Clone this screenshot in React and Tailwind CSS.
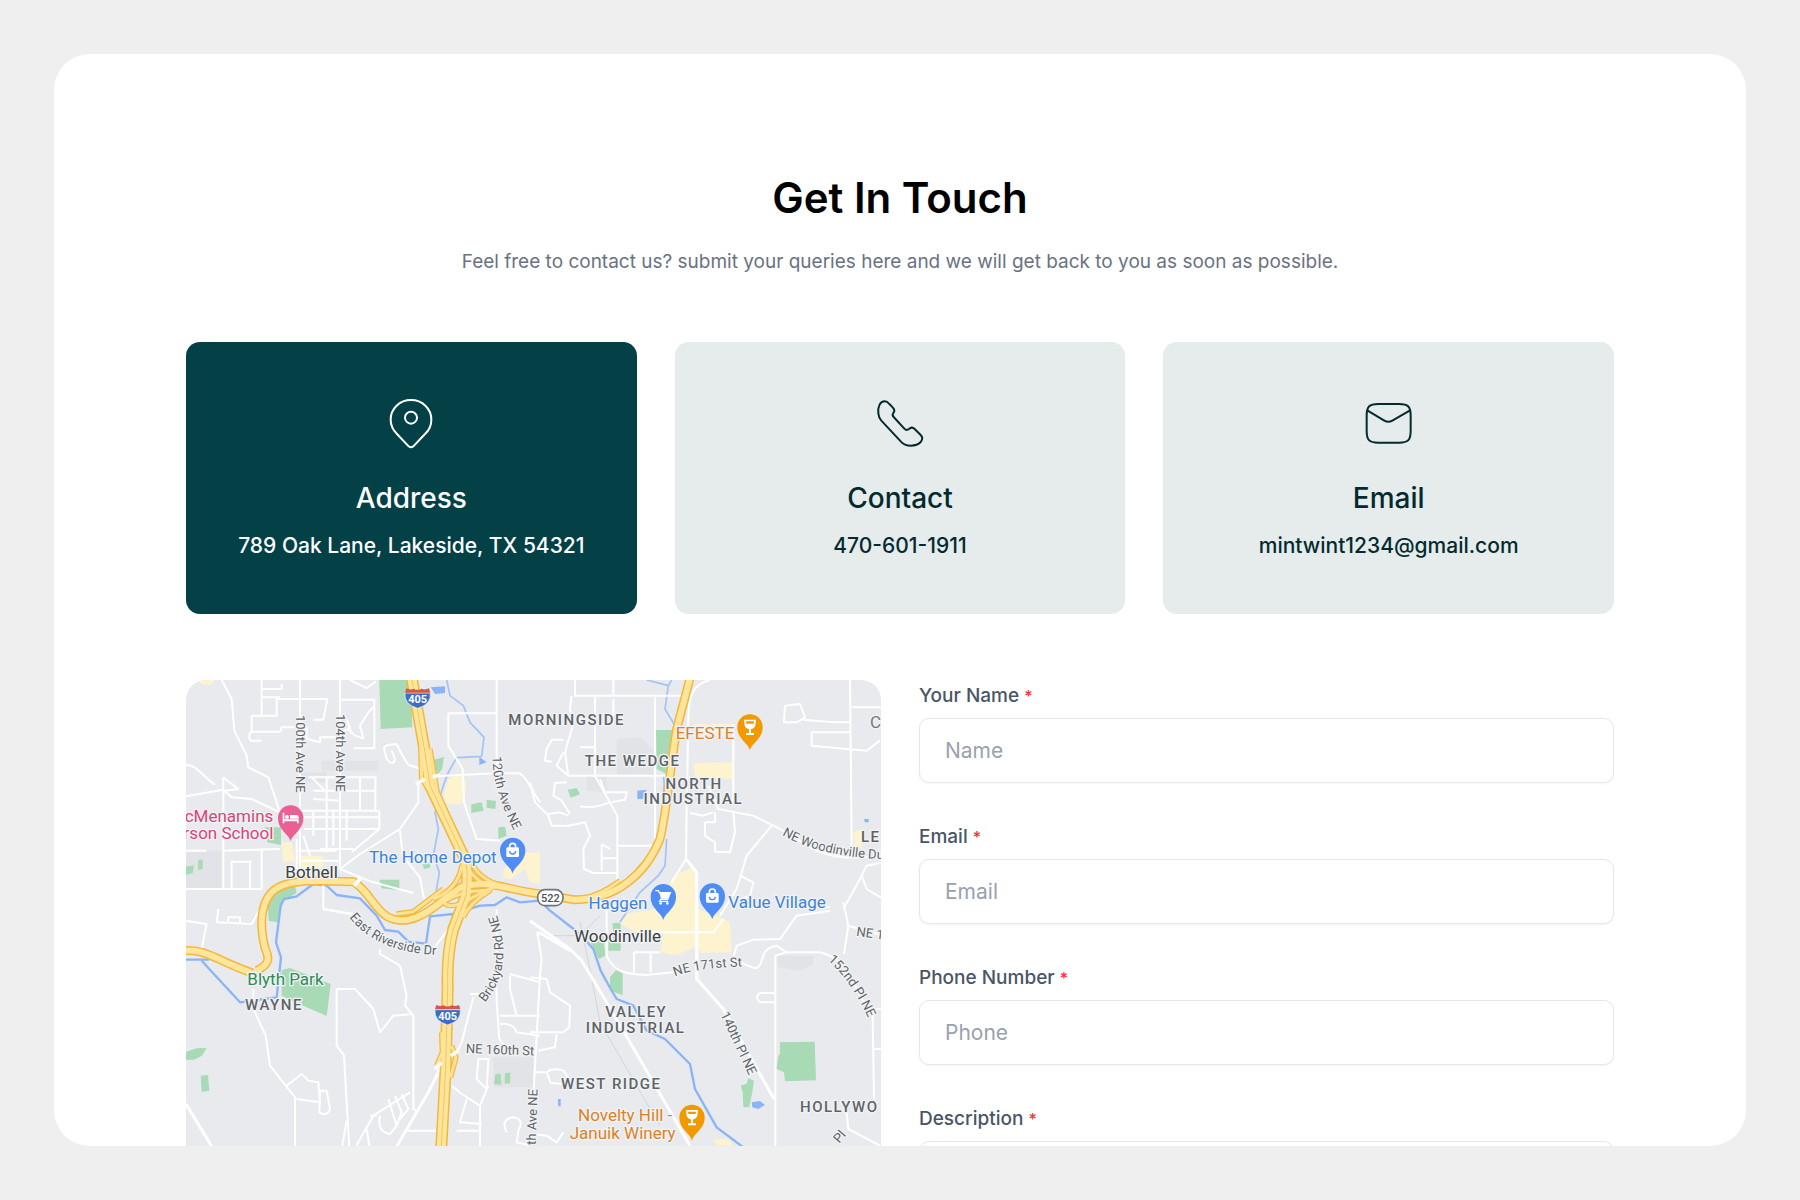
const cards = [
  { title: "Address", text: "789 Oak Lane, Lakeside, TX 54321", icon: PinIcon, active: true },
  { title: "Contact", text: "470-601-1911", icon: PhoneIcon },
  { title: "Email", text: "mintwint1234@gmail.com", icon: MailIcon },
];

const fields = [
  { id: "name", label: "Your Name", placeholder: "Name", type: "text" },
  { id: "email", label: "Email", placeholder: "Email", type: "email" },
  { id: "phone", label: "Phone Number", placeholder: "Phone", type: "tel" },
];

const iconProps = {
  className: "size-14",
  fill: "none",
  stroke: "currentColor",
  strokeWidth: 6,
  strokeLinecap: "round",
  strokeLinejoin: "round",
  "aria-hidden": true,
};

function PinIcon() {
  return (
    <svg viewBox="40 48 168 168" {...iconProps}>
      <path d="M124 60C90 60 63 86 63 119C63 140 72 152 82 162L117 199Q124 205 131 199L166 162C177 152 185 140 185 119C185 86 158 60 124 60Z" />
      <circle cx="124" cy="113" r="18" />
    </svg>
  );
}

function PhoneIcon() {
  return (
    <svg viewBox="36 48 168 168" {...iconProps}>
      <path d="M55 100C53 80 60 64 74 64C81 64 84 67 88 72L98 82C104 88 105 93 100 99C97 103 97 107 101 111L133 146C138 151 143 150 147 147C152 142 159 142 164 147L182 165C189 172 187 180 182 186C174 195 164 197 152 197C140 197 132 194 125 187L64 122C58 116 56 108 55 100Z" />
    </svg>
  );
}

function MailIcon() {
  return (
    <svg viewBox="34 48 168 168" {...iconProps}>
      <path d="M86 72H148C176 72 183 80 183 108V152C183 180 176 188 148 188H86C58 188 51 180 51 152V108C51 80 58 72 86 72Z" />
      <path d="M54 92L104 122Q116 129 128 122L180 92" />
    </svg>
  );
}

const greens = [
  "M598 33H692L697 175L602 180Z",
  "M762 272L792 264L786 300L772 318Z",
  "M874 406L905 400L911 425L874 432Z",
  "M920 392L948 396L946 420L920 416Z",
  "M955 475L975 473L980 500L955 510Z",
  "M255 475H303V528L262 520Z",
  "M18 592L42 590L38 612L18 618Z",
  "M55 572H68V600L54 602Z",
  "M598 632H658V664L605 658Z",
  "M728 585L750 582L750 596L732 600Z",
  "M262 690L290 668L345 650L350 672L310 695L292 760L266 755Z",
  "M305 903L330 897L452 945L440 1041L370 1010L305 980Z",
  "M18 1148L50 1138L80 1137L66 1160L42 1172L18 1172Z",
  "M62 1220L84 1218L88 1265L65 1269Z",
  "M946 1216L962 1214L964 1247L942 1246Z",
  "M975 1212L991 1211L990 1243L974 1244Z",
  "M1428 183H1482L1470 320L1430 300Z",
  "M1163 362L1190 357L1200 376L1172 386Z",
  "M1232 822L1270 800L1276 860L1256 870Z",
  "M1298 762H1322V845H1285V815H1300Z",
  "M1290 925L1308 903L1328 912V978L1290 965Z",
  "M1800 1120L1904 1118L1908 1234L1815 1237L1812 1210L1790 1200L1795 1160L1800 1155Z",
  "M1682 1250L1700 1244L1705 1228L1722 1235L1718 1262L1708 1314L1690 1315L1688 1270Z",
];

const yellows = [
  "M805 330Q830 315 850 325L860 345L848 400Q825 415 795 400Q790 380 798 350Z",
  "M305 520H335L345 575L310 580Z",
  "M355 560H430V590L360 620Z",
  "M970 600L1030 550H1080V645L1050 640L1035 600L990 632L970 625Z",
  "M1540 283L1660 280V330L1545 325Z",
  "M1545 165H1660V200H1545Z",
  "M1540 595L1550 650V720L1600 735L1650 760L1655 850L1560 852L1555 830L1490 858L1440 850L1450 790H1370L1320 765L1335 735L1430 720L1480 620Z",
  "M60 33L105 33L90 48L62 45Z",
  "M2020 490L2045 480V540L2025 535Z",
  "M1600 1412L1640 1408L1660 1428H1610Z",
];

const grays = [
  "M425 275H595V305H425Z",
  "M940 1165H1060V1255H940Z",
  "M1310 210L1380 205L1420 240V320L1310 315Z",
  "M1790 860H1900V885L1860 905L1795 895Z",
  "M18 545H125V660H18Z",
  "M1220 320H1280V370L1220 365Z",
  "M360 310H440V340H360Z",
];

const localRoads = [
  "M125 33L155 90L163 185L200 260L205 295L265 325L300 430",
  "M360 33V600M480 33V600M245 33V145M245 60H305V45M245 85H300",
  "M215 140H290V90H442L430 152H400M290 90V140M215 140V186",
  "M245 215H212Q203 205 212 188H300L305 175H380V210L420 220V205H470",
  "M510 33L560 57L588 37M480 92H583V238H520M480 190L505 180L525 200L550 208L540 170L565 130L580 115M500 150L515 195",
  "M612 240Q612 225 650 226L668 260L685 288L725 300M612 240L620 270Q640 295 645 270L635 245",
  "M18 288C50 285 75 330 105 347M130 325V400M130 325L175 360L135 365M18 382L130 362L155 385L215 390L300 430",
  "M360 425H598M372 480H595M372 445H595M385 325H590M400 365H590M400 390L480 395M395 325L440 370M440 325V550M540 325V425M586 325V425M598 425V480L515 550M400 425V500M460 425V530M500 425V515M420 540H520M350 545H470M360 575H480M350 510V600M370 500L390 560",
  "M130 400V660M18 660H245M155 660V578H215M210 578V660M245 545V660M130 545L300 540M130 500L225 510M18 545H80",
  "M715 335V400L660 480L540 555L480 600L580 640L700 672M660 485L668 560L720 625L732 690",
  "M950 33V315M805 133H950M805 133V230L848 300L852 400L890 510L960 515M765 322L950 313H1020C1045 330 1055 365 1080 400",
  "M430 640V720L520 735",
  "M1185 33V80H1505M1300 33V80M1175 80L1170 115L1178 170L1155 250L1165 320M1245 80V320L1312 440V660M1165 320H1460M1300 90V140M1425 85V530H1312",
  "M1100 240L1115 212H1150M1100 240L1095 275L1115 278M1150 250L1130 290L1165 320M1200 235H1245M1050 340L1065 400L1105 440L1115 470L1165 470L1215 460L1230 500L1210 540L1212 600L1240 612H1312",
  "M1160 340L1125 342L1120 380L1145 395L1170 435M1105 435L1140 430L1165 440M1200 412Q1240 420 1290 400M1260 330L1275 370H1340L1335 392L1295 400M1265 525V605M1265 525L1290 540M1265 568H1310",
  "M1590 33C1540 45 1525 80 1525 150L1520 430L1518 570L1475 640M1518 570L1550 610V720",
  "M1585 350L1615 420L1720 440L1800 480L1900 540C1980 580 2060 560 2110 565",
  "M1775 470L1700 560L1670 660L1620 740M2010 33L2015 530M2015 115H2110M1815 110L1860 105L1875 145L1850 160H1812ZM1870 152L1960 160H2010M1895 190H2010M1895 190V230L2060 245L2100 215",
  "M1575 460L1605 460V430M1575 460V500L1605 520V548L1650 550L1665 490L1660 430M1530 432L1570 440L1600 430M1660 165V400M1680 620L1720 640L1710 680L1660 700",
  "M2110 580L2060 590L2045 620L2060 660L2110 690M2045 620L1990 720M1860 710L1950 715",
  "M220 960V1020L257 1100L270 1190L345 1285V1440M320 1250L365 1215L385 1235L415 1240L420 1300L350 1290M420 1265H440L450 1320Q440 1345 418 1330Z",
  "M470 960H525L580 1020L600 1090L640 1040L700 1035M470 960V1130L492 1160L508 1440M600 840V855L660 890L680 980L675 1010L700 1040V1320L715 1330",
  "M430 720L510 735M820 760L760 840M880 985L845 1120L825 1160M870 975H920M895 1170H925L920 1260L890 1230Z",
  "M950 720V1000L958 1110L980 1140M990 920V960L1010 1040M960 1040H1080M960 1065Q1000 1060 1010 1090L1080 1100M990 915L1080 940",
  "M815 1250L845 1275L900 1310V1440M860 1290L840 1360L905 1365M830 1385H900M925 1250L900 1310M980 1390Q960 1350 1000 1345Q1035 1350 1015 1385L1010 1420L1050 1430",
  "M530 1428L580 1340L690 1270M570 1340L590 1340M600 1340Q590 1390 630 1395L650 1370L625 1290M645 1280L665 1330L650 1370M665 1275L685 1320L660 1350M680 1385H785M560 1380L570 1440M500 1355L485 1440",
  "M115 720L110 760L215 765L240 720M145 765V745H180V765M18 755L80 765L65 840",
  "M1077 800L1072 790L1085 870L1080 920L1060 1280M1050 925L1100 930L1110 970L1170 1010L1168 1075L1150 1090H1050M1130 1095L1125 1135L1075 1145",
  "M1060 1210H1095M1175 1240L1150 1205Q1120 1195 1100 1210L1112 1242L1150 1245M1050 1395L1100 1400L1130 1420L1150 1390",
  "M1280 720V860C1300 910 1340 915 1400 918L1480 910M1362 850V910M1412 850V910M1362 850H1440M1412 790H1600L1630 750",
  "M1680 880L1725 898C1760 890 1730 840 1790 830L1820 850H1920C1990 865 2010 920 2040 980L2078 1040L2082 1290M2080 1140H2110M2070 1020H2110",
  "M1552 700V930L1630 1020L1782 1290M1990 700L2005 770L1992 855M2005 770L2110 800M1660 865L1670 830L1720 812L1800 810L1850 740L1950 725",
  "M1786 860V1440M1786 860L1820 850M1786 972H1740Q1722 985 1740 1000H1786M2000 1330L2005 1380L2100 1430",
];

const arterials = [
  "M1050 755L1170 840L1205 875L1280 1000L1350 1120L1530 1430",
  "M1518 570L1550 610V930L1630 1020L1782 1290",
  "M18 1305L100 1440",
  "M785 1190L745 1270L640 1450",
  "M1077 790L1170 845",
];

const streams = [
  "M800 33L810 80L850 110L870 160L912 205L905 262L830 266L805 310L790 350L765 430L775 480L760 560L778 610L765 690",
  "M1400 33L1465 50L1455 120L1485 170M1475 33L1465 50M1450 320Q1455 350 1450 370",
  "M1460 510L1455 590L1435 620L1380 670L1320 760",
];

const rivers = [
  "M18 872H88M65 875L180 1000L290 985L303 865L288 820L302 710L312 690L350 682L400 645L440 650L470 678L540 688L590 740L615 783L655 788L685 818L738 824L750 742L820 735L900 710L945 708L980 685L1020 700L1080 695L1110 725L1200 795L1240 840L1262 905L1292 960L1310 990L1360 1010L1400 1085L1455 1110L1530 1185L1545 1260L1610 1375L1690 1435",
];

const interstate = [
  "M694 20L735 250L750 350L850 560Q868 600 858 680L820 780Q800 850 803 960L797 1200L775 1593",
];

const highways = [
  "M18 845C80 840 120 880 218 912M230 905C275 885 265 860 256 840C240 780 238 710 275 670C300 645 340 637 400 635L520 638C565 665 580 715 620 742C680 775 740 735 800 685L850 650",
  "M860 650C930 635 960 655 1050 670L1180 692C1310 695 1400 610 1440 510C1460 430 1470 300 1490 180L1532 20",
];

const ramps = [
  "M722 230L725 330L765 390L845 560",
  "M750 240L772 370L850 545",
  "M845 590Q835 660 760 690",
  "M860 590Q890 650 960 655",
  "M880 590Q905 640 1000 660",
  "M785 690Q800 730 870 690T940 660",
  "M790 700Q850 660 930 665Q870 700 850 745",
  "M650 735L700 728L790 660",
  "M1200 690Q1260 680 1320 635",
  "M785 1090L787 1150L770 1190",
  "M815 1130L828 1165L812 1225",
];

const curves = {
  riverside: "M508 745Q590 850 770 858",
  brickyard: "M915 1000Q1005 895 948 730",
  ave120: "M938 262Q935 360 1010 500",
  woodinville: "M1806 498Q1930 570 2160 572",
  st171: "M1485 922Q1550 895 1700 892",
  pl152: "M1943 874Q2015 935 2070 1060",
};

const districts = [
  [1160, 169, "MORNINGSIDE"],
  [1358, 292, "THE WEDGE"],
  [1542, 359, "NORTH"],
  [1540, 405, "INDUSTRIAL"],
  [282, 1023, "WAYNE"],
  [1369, 1045, "VALLEY"],
  [1367, 1091, "INDUSTRIAL"],
  [1294, 1261, "WEST RIDGE"],
];

function Layer({ paths, color, width }) {
  return (
    <g fill="none" stroke={color} strokeWidth={width} strokeLinejoin="round">
      {paths.map((d) => (
        <path key={d} d={d} />
      ))}
    </g>
  );
}

function Areas({ paths, color }) {
  return (
    <g fill={color}>
      {paths.map((d) => (
        <path key={d} d={d} />
      ))}
    </g>
  );
}

function Marker({ x, y, color, children }) {
  return (
    <g transform={`translate(${x} ${y})`}>
      <path d="M0 70C-5 48-38 36-38 0A38 38 0 1 1 38 0C38 36 5 48 0 70Z" fill={color} />
      {children}
    </g>
  );
}

const glass = (
  <path
    d="M-18-22H18L16-4Q13 5 3 7V18H12V24H-12V18H-3V7Q-13 5-16-4ZM-12-17L-11-10H11L12-17Z"
    fill="#fff"
    fillRule="evenodd"
  />
);

const bag = (
  <g>
    <path d="M-9-8V-12A9 9 0 0 1 9-12V-8" fill="none" stroke="#fff" strokeWidth="5" />
    <rect x="-19" y="-9" width="38" height="29" rx="4" fill="#fff" />
    <path d="M-9 2A9 9 0 0 0 9 2" fill="none" stroke="#4f8df5" strokeWidth="4" />
  </g>
);

function Shield({ x, y }) {
  return (
    <g transform={`translate(${x} ${y})`}>
      <path d="M-38-16H38Q42 18 0 30Q-42 18-38-16Z" fill="#3b6fc4" stroke="#fff" strokeWidth="2" />
      <path d="M-34-30Q-22-24-12-29Q0-22 12-29Q22-24 34-30L38-17H-38Z" fill="#d1574f" />
      <text y="15" textAnchor="middle" fill="#fff" fontSize="33" fontWeight="700">
        405
      </text>
    </g>
  );
}

function AreaMap() {
  return (
    <svg
      viewBox="18 33 2085 1560"
      className="block w-full rounded-[20px] bg-[#e8eaed] font-[Roboto,sans-serif]"
      role="img"
      aria-label="Map of Bothell and Woodinville"
    >
      <defs>
        {Object.entries(curves).map(([id, d]) => (
          <path key={id} id={id} d={d} />
        ))}
      </defs>
      <Areas paths={grays} color="#e1e3e7" />
      <Areas paths={greens} color="#a8dab5" />
      <Areas paths={yellows} color="#fdf3cf" />
      <path
        d="M752 55L795 52V72L765 75ZM898 264L920 280L898 288ZM1372 365L1400 362L1388 390H1372ZM1715 1300L1740 1296L1755 1308L1735 1320L1717 1315ZM1134 1290H1142V1312H1135ZM2052 450H2066V460H2055Z"
        fill="#8ab4f8"
      />
      <path
        d="M1200 760L1230 900L1260 1060L1370 1250L1440 1370M1100 800H1200L1260 740"
        fill="none"
        stroke="#d3d5d9"
        strokeWidth="3"
      />
      <Layer paths={streams} color="#a3c3f7" width="5" />
      <Layer paths={rivers} color="#8ab4f8" width="7" />
      <Layer paths={localRoads} color="#fff" width="6" />
      <Layer paths={arterials} color="#fff" width="9" />

      {/* highway casings first, then the fills */}
      <Layer paths={ramps} color="#f3b63f" width="16" />
      <Layer paths={highways} color="#f3b63f" width="27" />
      <Layer paths={interstate} color="#f3b63f" width="36" />
      <Layer paths={ramps} color="#fde293" width="9" />
      <Layer paths={highways} color="#fde699" width="18" />
      <Layer paths={interstate} color="#fde699" width="27" />
      <Layer paths={interstate} color="#f6c561" width="3" />
      <path
        d="M708 345L735 330M758 324L780 318M765 1200L785 1180M812 1160L835 1145M522 650L545 625"
        stroke="#fff"
        strokeWidth="11"
      />

      <Shield x={713} y={88} />
      <Shield x={803} y={1038} />
      <rect x="1073" y="662" width="76" height="48" rx="22" fill="#fff" stroke="#70757a" strokeWidth="5" />
      <text x="1111" y="698" textAnchor="middle" fontSize="33" fontWeight="500" fill="#4d5156">
        522
      </text>

      <g stroke="#f1f3f4" strokeWidth="8" strokeLinejoin="round" paintOrder="stroke">
        <g fontSize="45" fontWeight="500" fill="#5f6368" textAnchor="middle" className="tracking-widest">
          {districts.map(([x, y, name]) => (
            <text key={x} x={x} y={y}>
              {name}
            </text>
          ))}
          <text x="1860" y="1328" textAnchor="start">HOLLYWO</text>
          <text x="2043" y="519" textAnchor="start">LE</text>
        </g>
        <g fontSize="39" fill="#5f6368">
          <text transform="translate(349 138) rotate(90)">100th Ave NE</text>
          <text transform="translate(467 135) rotate(90)">104th Ave NE</text>
          <text transform="translate(1621 1036) rotate(65)">140th Pl NE</text>
          <text transform="translate(1067 1428) rotate(-88)">th Ave NE</text>
          <text transform="translate(857 1152) rotate(2)">NE 160th St</text>
          <text transform="translate(2028 800) rotate(8)">NE 1</text>
          <text transform="translate(1978 1424) rotate(-50)">Pl</text>
          <text><textPath href="#riverside">East Riverside Dr</textPath></text>
          <text><textPath href="#brickyard">Brickyard Rd NE</textPath></text>
          <text><textPath href="#ave120">120th Ave NE</textPath></text>
          <text><textPath href="#woodinville">NE Woodinville Duv</textPath></text>
          <text><textPath href="#st171">NE 171st St</textPath></text>
          <text><textPath href="#pl152">152nd Pl NE</textPath></text>
        </g>
        <g fontSize="51">
          <text x="2070" y="178" fill="#70757a">C</text>
          <text x="316" y="626" fill="#3c4043">Bothell</text>
          <text x="1182" y="818" fill="#3c4043">Woodinville</text>
          <text x="202" y="949" fill="#2e8b57">Blyth Park</text>
          <text x="280" y="458" textAnchor="end" fill="#d6457c">cMenamins</text>
          <text x="280" y="510" textAnchor="end" fill="#d6457c">rson School</text>
          <text x="950" y="583" textAnchor="end" fill="#3f82d6">The Home Depot</text>
          <text x="1402" y="720" textAnchor="end" fill="#3f82d6">Haggen</text>
          <text x="1645" y="716" fill="#3f82d6">Value Village</text>
          <text x="1663" y="211" textAnchor="end" fill="#d9822b">EFESTE</text>
          <text x="1477" y="1357" textAnchor="end" fill="#d9822b">Novelty Hill -</text>
          <text x="1487" y="1409" textAnchor="end" fill="#d9822b">Januik Winery</text>
        </g>
      </g>

      <Marker x={332} y={447} color="#ea5f94">
        <path
          d="M-24-16H-19V4H24V16H19V10H-19V16H-24ZM-2-9H18Q24-9 24-2V2H-2ZM-11-9A6 6 0 1 1-11 3A6 6 0 1 1-11-9Z"
          fill="#fff"
        />
      </Marker>
      <Marker x={998} y={544} color="#4f8df5">{bag}</Marker>
      <Marker x={1597} y={681} color="#4f8df5">{bag}</Marker>
      <Marker x={1450} y={683} color="#4f8df5">
        <path d="M-24-18H-15L-12-12H21L13 8H-8L-11 14H15" fill="none" stroke="#fff" strokeWidth="4" />
        <path d="M-12-12H21L13 6H-7Z" fill="#fff" />
        <circle cx="-8" cy="20" r="4" fill="#fff" />
        <circle cx="12" cy="20" r="4" fill="#fff" />
      </Marker>
      <Marker x={1710} y={174} color="#f29900">{glass}</Marker>
      <Marker x={1536} y={1345} color="#f29900">{glass}</Marker>
    </svg>
  );
}

function InfoCard({ title, text, icon: Icon, active }) {
  return (
    <div
      className={`flex flex-col items-center rounded-[14px] px-4 py-[54px] text-center ${
        active ? "bg-[#034147] text-white" : "bg-[#e6ebeb] text-[#032b2f]"
      }`}
    >
      <Icon />
      <h2 className="mt-7 text-[28px] leading-9 font-medium">{title}</h2>
      <p className="mt-4 text-[21px] leading-7 font-medium">{text}</p>
    </div>
  );
}

function FieldLabel({ id, children }) {
  return (
    <label htmlFor={id} className="text-[19px] leading-8 font-medium text-gray-600">
      {children} <span className="text-base text-red-500">*</span>
    </label>
  );
}

const fieldClass =
  "w-full rounded-[10px] border border-gray-200 bg-white px-[25px] text-[21px] text-gray-700 shadow-xs outline-none placeholder:text-gray-400 focus:border-[#034147]";

const App = () => {
  return (
    <div className="h-screen bg-[#efefef] p-[54px] font-[Inter,sans-serif]">
      <main className="h-full overflow-hidden rounded-[36px] bg-white px-[132px] pt-[116px]">
        <header className="text-center">
          <h1 className="text-[42px] leading-14 font-semibold text-black">Get In Touch</h1>
          <p className="mt-[22px] text-[19px] leading-7 text-gray-500">
            Feel free to contact us? submit your queries here and we will get back to you as soon as possible.
          </p>
        </header>

        <section className="mt-[66px] grid grid-cols-3 gap-[38px]">
          {cards.map((card) => (
            <InfoCard key={card.title} {...card} />
          ))}
        </section>

        <section className="mt-[66px] grid grid-cols-2 items-start gap-[38px]">
          <AreaMap />
          <form className="flex flex-col gap-[38px]" onSubmit={(e) => e.preventDefault()}>
            {fields.map(({ id, label, placeholder, type }) => (
              <div key={id} className="flex flex-col gap-1.5">
                <FieldLabel id={id}>{label}</FieldLabel>
                <input id={id} type={type} placeholder={placeholder} className={`h-[65px] ${fieldClass}`} />
              </div>
            ))}
            <div className="flex flex-col gap-1.5">
              <FieldLabel id="description">Description</FieldLabel>
              <textarea id="description" rows={5} className={`py-4 ${fieldClass}`} />
            </div>
          </form>
        </section>
      </main>
    </div>
  );
};

export default App;
